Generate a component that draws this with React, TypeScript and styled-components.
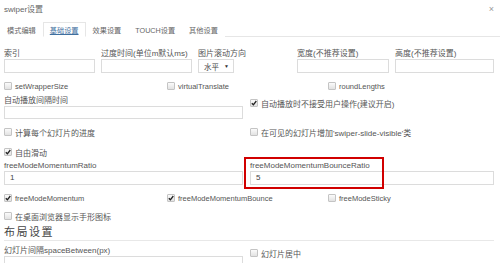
import React, { FC } from 'react';
import styled, { createGlobalStyle } from 'styled-components';

const GlobalStyle = createGlobalStyle`
  html, body {
    margin: 0;
    padding: 0;
    background: #fff;
  }
  body {
    font-family: "Liberation Sans", "Noto Sans CJK SC", sans-serif;
    font-size: 8px;
    color: #444;
  }
`;

const Dialog = styled.div`
  width: 500px;
  height: 263px;
  overflow: hidden;
  background: #fff;
`;

const Header = styled.div`
  display: flex;
  justify-content: space-between;
  align-items: center;
  height: 17px;
  padding: 0 6px 0 4px;
`;

const Title = styled.span`
  font-size: 8px;
  color: #666;
`;

const Close = styled.span`
  font-size: 9px;
  color: #999;
`;

const Tabs = styled.div`
  display: flex;
  margin-top: 4px;
  height: 15px;
  border-bottom: 1px solid #e6e6e6;
`;

const Tab = styled.div<{ $active?: boolean }>`
  padding: 0 6px;
  line-height: 15px;
  font-size: 7.2px;
  color: ${({ $active }) => ($active ? '#3f6f9f' : '#666')};
  text-decoration: ${({ $active }) => ($active ? 'underline' : 'none')};
  border: 1px solid ${({ $active }) => ($active ? '#e6e6e6' : 'transparent')};
  border-bottom-color: ${({ $active }) => ($active ? '#fff' : 'transparent')};
  background: #fff;
  height: 15px;
  box-sizing: border-box;
  margin-bottom: -1px;
  margin-top: 1px;
`;

const Body = styled.div`
  padding: 0 6px 0 4px;
`;

const TopRow = styled.div`
  display: grid;
  grid-template-columns: 91px 91px 93px 92px 1fr;
  column-gap: 6px;
  margin-top: 12px;
`;

const CheckRow = styled.div<{ $mt: number }>`
  display: grid;
  grid-template-columns: 163px 161px 1fr;
  margin-top: ${({ $mt }) => $mt}px;
`;

const TwoCol = styled.div<{ $mt: number }>`
  display: grid;
  grid-template-columns: 239px 1fr;
  column-gap: 7px;
  margin-top: ${({ $mt }) => $mt}px;
`;

const Cell = styled.div<{ $offset?: number }>`
  position: relative;
  padding-top: ${({ $offset }) => $offset || 0}px;
`;

const Label = styled.div`
  line-height: 10px;
  height: 10px;
  font-size: 8px;
  color: #555;
  white-space: nowrap;
`;

const TextInput = styled.div<{ $h?: number }>`
  box-sizing: border-box;
  height: ${({ $h }) => $h || 14}px;
  border: 1px solid #dcdcdc;
  padding: 0 5px;
  line-height: ${({ $h }) => ($h || 14) - 2}px;
  font-size: 8px;
  color: #444;
`;

const Select = styled.div`
  box-sizing: border-box;
  width: 36px;
  height: 14px;
  border: 1px solid #dcdcdc;
  display: flex;
  align-items: center;
  justify-content: space-between;
  padding: 0 4px 0 5px;
  font-size: 7.5px;
  color: #444;
`;

const Arrow = styled.span`
  font-size: 5px;
  color: #333;
`;

const CheckLine = styled.label<{ $big?: boolean }>`
  display: flex;
  align-items: center;
  height: 10px;
  gap: 3px;
  font-size: ${({ $big }) => ($big ? 8 : 7.5)}px;
  color: #555;
  white-space: nowrap;
`;

const Box = styled.span`
  box-sizing: border-box;
  width: 8px;
  height: 8px;
  border: 1px solid #c4c4c4;
  border-radius: 1px;
  background: linear-gradient(#fbfbfb, #e2e2e2);
  display: inline-flex;
  align-items: center;
  justify-content: center;
  flex: none;
`;

const Section = styled.div`
  margin-top: 4px;
  height: 15px;
  line-height: 15px;
  font-size: 11px;
  letter-spacing: 1.5px;
  color: #444;
  border-bottom: 1px solid #e8e8e8;
`;

const Highlight = styled.div`
  position: absolute;
  left: -6px;
  top: -4px;
  width: 140px;
  height: 32px;
  box-sizing: border-box;
  border: 2px solid #d10000;
  pointer-events: none;
`;

const Check: FC<{ label: string; checked?: boolean; big?: boolean }> = ({ label, checked, big }) => (
  <CheckLine $big={big}>
    <Box>
      {checked && (
        <svg width="6" height="6" viewBox="0 0 6 6">
          <path d="M0.8 3.2 L2.4 4.8 L5.3 1" fill="none" stroke="#222" strokeWidth="1.3" />
        </svg>
      )}
    </Box>
    {label}
  </CheckLine>
);

const Field: FC<{ label: string; value?: string; h?: number }> = ({ label, value, h }) => (
  <>
    <Label>{label}</Label>
    <TextInput $h={h}>{value}</TextInput>
  </>
);

const tabs = ['模式编辑', '基础设置', '效果设置', 'TOUCH设置', '其他设置'];

const App: FC = () => (
  <Dialog>
    <GlobalStyle />
    <Header>
      <Title>swiper设置</Title>
      <Close>×</Close>
    </Header>
    <Tabs>
      {tabs.map((t) => (
        <Tab key={t} $active={t === '基础设置'}>{t}</Tab>
      ))}
    </Tabs>
    <Body>
      <TopRow>
        <Cell><Field label="索引" /></Cell>
        <Cell><Field label="过度时间(单位m默认ms)" /></Cell>
        <Cell>
          <Label>图片滚动方向</Label>
          <Select>水平<Arrow>▼</Arrow></Select>
        </Cell>
        <Cell><Field label="宽度(不推荐设置)" /></Cell>
        <Cell><Field label="高度(不推荐设置)" /></Cell>
      </TopRow>
      <CheckRow $mt={8}>
        <Check label="setWrapperSize" />
        <Check label="virtualTranslate" />
        <Check label="roundLengths" />
      </CheckRow>
      <TwoCol $mt={5}>
        <Cell><Field label="自动播放间隔时间" h={13} /></Cell>
        <Cell $offset={2}><Check label="自动播放时不接受用户操作(建议开启)" checked big /></Cell>
      </TwoCol>
      <TwoCol $mt={8}>
        <Check label="计算每个幻灯片的进度" big />
        <Check label="在可见的幻灯片增加'swiper-slide-visible'类" big />
      </TwoCol>
      <TwoCol $mt={10}>
        <Check label="自由滑动" checked big />
      </TwoCol>
      <TwoCol $mt={4}>
        <Cell><Field label="freeModeMomentumRatio" value="1" /></Cell>
        <Cell>
          <Field label="freeModeMomentumBounceRatio" value="5" />
          <Highlight />
        </Cell>
      </TwoCol>
      <CheckRow $mt={8}>
        <Check label="freeModeMomentum" checked />
        <Check label="freeModeMomentumBounce" checked />
        <Check label="freeModeSticky" />
      </CheckRow>
      <TwoCol $mt={8}>
        <Check label="在桌面浏览器显示手形图标" big />
      </TwoCol>
      <Section>布局设置</Section>
      <TwoCol $mt={5}>
        <Cell><Field label="幻灯片间隔spaceBetween(px)" /></Cell>
        <Cell $offset={2}><Check label="幻灯片居中" big /></Cell>
      </TwoCol>
    </Body>
  </Dialog>
);

export default App;
